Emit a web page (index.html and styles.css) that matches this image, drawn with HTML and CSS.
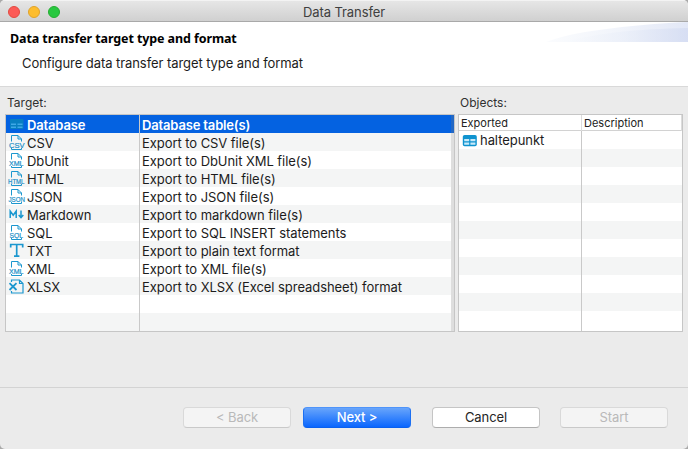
FILE: index.html
```
<!DOCTYPE html>
<html lang="en">
<head>
<meta charset="utf-8">
<title>Data Transfer</title>
<link rel="stylesheet" href="styles.css">
</head>
<body>
<svg class="defs" width="0" height="0">
  <defs>
    <symbol id="page" viewBox="0 0 17 16">
      <path d="M3.5 7.5V1.5H10L13.5 5V7.5M10 1.5V5h3.5M3.5 14v1.5H13.5V14" fill="none" stroke="#1b97cf"/>
    </symbol>
  </defs>
</svg>
<div class="window">
  <header class="titlebar">
    <div class="lights"><i class="light red"></i><i class="light yellow"></i><i class="light green"></i></div>
    <span class="window-title">Data Transfer</span>
  </header>
  <section class="banner">
    <div class="banner-text">
      <h1>Data transfer target type and format</h1>
      <p>Configure data transfer target type and format</p>
    </div>
    <svg class="swoosh" width="142" height="20" viewBox="0 0 142 20">
      <defs><linearGradient id="sw"><stop offset="0" stop-color="#f8fafd"/><stop offset=".5" stop-color="#e8edf8"/><stop offset="1" stop-color="#cfd8f1"/></linearGradient></defs>
      <path d="M0 20C24 10 80 3 142 0V20Z" fill="url(#sw)" opacity=".6"/>
      <path d="M18 20C50 11 90 7 142 6V20Z" fill="url(#sw)" opacity=".6"/>
    </svg>
  </section>
  <main class="content">
    <section class="pane target">
      <label>Target:</label>
      <div class="table targets">
        <div class="row selected"><div class="name"><svg width="17" height="16"><rect x="2" y="3" width="13.5" height="10" rx="1" fill="#087fc1"/><path d="M3 7.5h5v1.6H3zM9.5 7.5h5v1.6h-5zM3 10.5h5v1.5H3zM9.5 10.5h5v1.5h-5z" fill="#3fa8e6"/></svg><span>Database</span></div><div class="desc"><span>Database table(s)</span></div></div>
        <div class="row"><div class="name"><svg width="17" height="16"><use href="#page"/><text x="1" y="13.5" textLength="15.5" lengthAdjust="spacingAndGlyphs">CSV</text></svg><span>CSV</span></div><div class="desc"><span>Export to CSV file(s)</span></div></div>
        <div class="row"><div class="name"><svg width="17" height="16"><use href="#page"/><text x="1" y="13.5" textLength="14.5" lengthAdjust="spacingAndGlyphs">XML</text></svg><span>DbUnit</span></div><div class="desc"><span>Export to DbUnit XML file(s)</span></div></div>
        <div class="row"><div class="name"><svg width="17" height="16"><use href="#page"/><text x="0" y="13.5" textLength="16.5" lengthAdjust="spacingAndGlyphs">HTML</text></svg><span>HTML</span></div><div class="desc"><span>Export to HTML file(s)</span></div></div>
        <div class="row"><div class="name"><svg width="17" height="16"><use href="#page"/><text x="0.5" y="13.5" textLength="16.5" lengthAdjust="spacingAndGlyphs">JSON</text></svg><span>JSON</span></div><div class="desc"><span>Export to JSON file(s)</span></div></div>
        <div class="row"><div class="name"><svg width="17" height="16"><path d="M2.2 12V5L5.2 9.2 8.2 5v7M13 4.5v7M10.7 9l2.3 2.6L15.3 9" fill="none" stroke="#1b97cf" stroke-width="1.5"/></svg><span>Markdown</span></div><div class="desc"><span>Export to markdown file(s)</span></div></div>
        <div class="row"><div class="name"><svg width="17" height="16"><use href="#page"/><text x="1.5" y="13.5" textLength="13.5" lengthAdjust="spacingAndGlyphs">SQL</text></svg><span>SQL</span></div><div class="desc"><span>Export to SQL INSERT statements</span></div></div>
        <div class="row"><div class="name"><svg width="17" height="16"><path d="M2.7 5.5V2.5h12v3M8.7 2.5V14M6 14.2h5.4" fill="none" stroke="#1b97cf" stroke-width="1.7"/></svg><span>TXT</span></div><div class="desc"><span>Export to plain text format</span></div></div>
        <div class="row"><div class="name"><svg width="17" height="16"><use href="#page"/><text x="1" y="13.5" textLength="14.5" lengthAdjust="spacingAndGlyphs">XML</text></svg><span>XML</span></div><div class="desc"><span>Export to XML file(s)</span></div></div>
        <div class="row"><div class="name"><svg width="17" height="16"><path d="M3.5 4v-2H11.5L15 5.5v9.5H3.5v-2M11.5 2V5.5h3.5" fill="none" stroke="#1b97cf" stroke-width="1.2"/><path d="M1.5 5.2l7 6.8M8.5 5.2l-7 6.8" stroke="#1b97cf" stroke-width="1.8"/></svg><span>XLSX</span></div><div class="desc"><span>Export to XLSX (Excel spreadsheet) format</span></div></div>
        <div class="row"><div class="name"></div><div class="desc"></div></div>
        <div class="row"><div class="name"></div><div class="desc"></div></div>
      </div>
    </section>
    <section class="pane objects">
      <label>Objects:</label>
      <div class="table exports">
        <div class="head"><div>Exported</div><div>Description</div></div>
        <div class="row"><div class="name"><svg width="17" height="16"><rect x="1.8" y="3" width="14" height="11.2" rx="1.8" fill="#0f93cf"/><path d="M3.2 7h5v2.2h-5zM9.4 7h5v2.2h-5zM3.2 10.5h5v2.2h-5zM9.4 10.5h5v2.2h-5z" fill="#c8eafa"/></svg><span>haltepunkt</span></div><div></div></div>
        <div class="row"><div class="name"></div><div></div></div>
        <div class="row"><div class="name"></div><div></div></div>
        <div class="row"><div class="name"></div><div></div></div>
        <div class="row"><div class="name"></div><div></div></div>
        <div class="row"><div class="name"></div><div></div></div>
        <div class="row"><div class="name"></div><div></div></div>
        <div class="row"><div class="name"></div><div></div></div>
        <div class="row"><div class="name"></div><div></div></div>
        <div class="row"><div class="name"></div><div></div></div>
        <div class="row last"><div class="name"></div><div></div></div>
      </div>
    </section>
  </main>
  <footer class="actions">
    <button class="btn disabled">&lt; Back</button>
    <button class="btn primary">Next &gt;</button>
    <button class="btn cancel">Cancel</button>
    <button class="btn disabled">Start</button>
  </footer>
</div>
</body>
</html>
```
FILE: styles.css
```
* { box-sizing: border-box; }
body { margin: 0; background: #a9a9a9; font-family: Inter, "Liberation Sans", sans-serif; font-size: 13px; color: #1c1c1c; overflow: hidden; }
.defs { display: block; }
.window { width: 688px; height: 449px; background: #ebebeb; border-radius: 5px; overflow: hidden; display: flex; flex-direction: column; }
.titlebar { height: 22px; flex: none; display: grid; grid-template-columns: 1fr auto 1fr; align-items: center; background: linear-gradient(#e6e6e6, #d0d0d0); border-top: 1px solid #f3f3f3; border-bottom: 1px solid #a9a9a9; }
.lights { display: flex; gap: 8px; padding-left: 8px; }
.light { width: 12px; height: 12px; border-radius: 50%; border: 1px solid; }
.red { background: #fc5b57; border-color: #e24b41; }
.yellow { background: #fdbd2e; border-color: #e1a32a; }
.green { background: #28c840; border-color: #24ad31; }
.window-title { color: #404040; line-height: 20px; letter-spacing: -0.08px; padding-top: 1px; }
.banner { height: 65px; flex: none; background: #fff; border-bottom: 1px solid #d9d9d9; display: flex; justify-content: space-between; }
.banner-text { padding: 8px 0 0 10px; white-space: nowrap; }
h1 { margin: 0; font: bold 12.5px/17px "Noto Sans", sans-serif; letter-spacing: -0.1px; color: #000; }
p { margin: 8px 0 0 12px; line-height: 17px; letter-spacing: -0.07px; }
.swoosh { display: block; }
.content { display: flex; gap: 3px; padding: 7px 5px 0; height: 300px; flex: none; }
.pane label { display: block; height: 20px; line-height: 17px; padding-left: 2px; font-size: 12px; color: #303030; }
.target { width: 450px; }
.objects { width: 225px; }
.table { border: 1px solid #c6c6c6; background: #fff; height: 218px; overflow: hidden; }
.row { height: 18px; display: grid; line-height: 20px; white-space: nowrap; letter-spacing: -0.06px; }
.row.last { height: 20px; }
.targets .row { grid-template-columns: 134px 1fr; }
.exports .row { grid-template-columns: 123px 1fr; line-height: 19px; }
.row:nth-child(even) { background: #f4f5f5; }
.exports .row:nth-child(even) { background: #fff; }
.exports .row:nth-child(odd) { background: #f4f5f5; }
.exports .row.last { background: #fff; }
.name { display: flex; height: 100%; padding-left: 2px; border-right: 1px solid #c9c9c9; }
.name svg { flex: none; margin: 1px 2px 0 0; overflow: visible; }
.name text { font: 7px "Liberation Sans", sans-serif; letter-spacing: 0; fill: #1b8fc8; stroke: #1b8fc8; stroke-width: 0.2px; }
.desc { padding-left: 2px; border-right: 3px solid #dedede; }
.targets .selected { background: #0462e1; color: #fff; font-weight: 600; letter-spacing: -0.16px; }
.selected .desc { border-right-color: #2468c4; }
.head { height: 16px; display: grid; grid-template-columns: 123px 1fr; font-size: 11px; line-height: 16px; border-bottom: 1px solid #d2d2d2; color: #222; }
.head div { padding-left: 2px; border-right: 1px solid #dcdcdc; }
.actions { flex: 1; border-top: 1px solid #d3d3d3; display: flex; padding: 19px 20px 0 0; justify-content: flex-end; }
.btn { width: 108px; height: 21px; padding: 0 0 1px; border: 1px solid #c5c5c5; border-bottom-color: #adadad; border-radius: 4px; background: #fff; font: 13px/18px Inter, sans-serif; letter-spacing: -0.08px; color: #252525; }
.btn.disabled { background: #f4f4f4; border-color: #d9d9d9; border-bottom-color: #c9c9c9; color: #b9b9b9; }
.btn.primary { background: linear-gradient(#68a5fb, #0a66fe); border-color: #4f94fa #1c70f2 #0a60ee; color: #fff; margin: 0 20px 0 12px; font-weight: 500; }
.btn.primary, .btn.disabled:first-child { position: relative; left: -1px; }
.btn.cancel { margin-right: 20px; }
```
